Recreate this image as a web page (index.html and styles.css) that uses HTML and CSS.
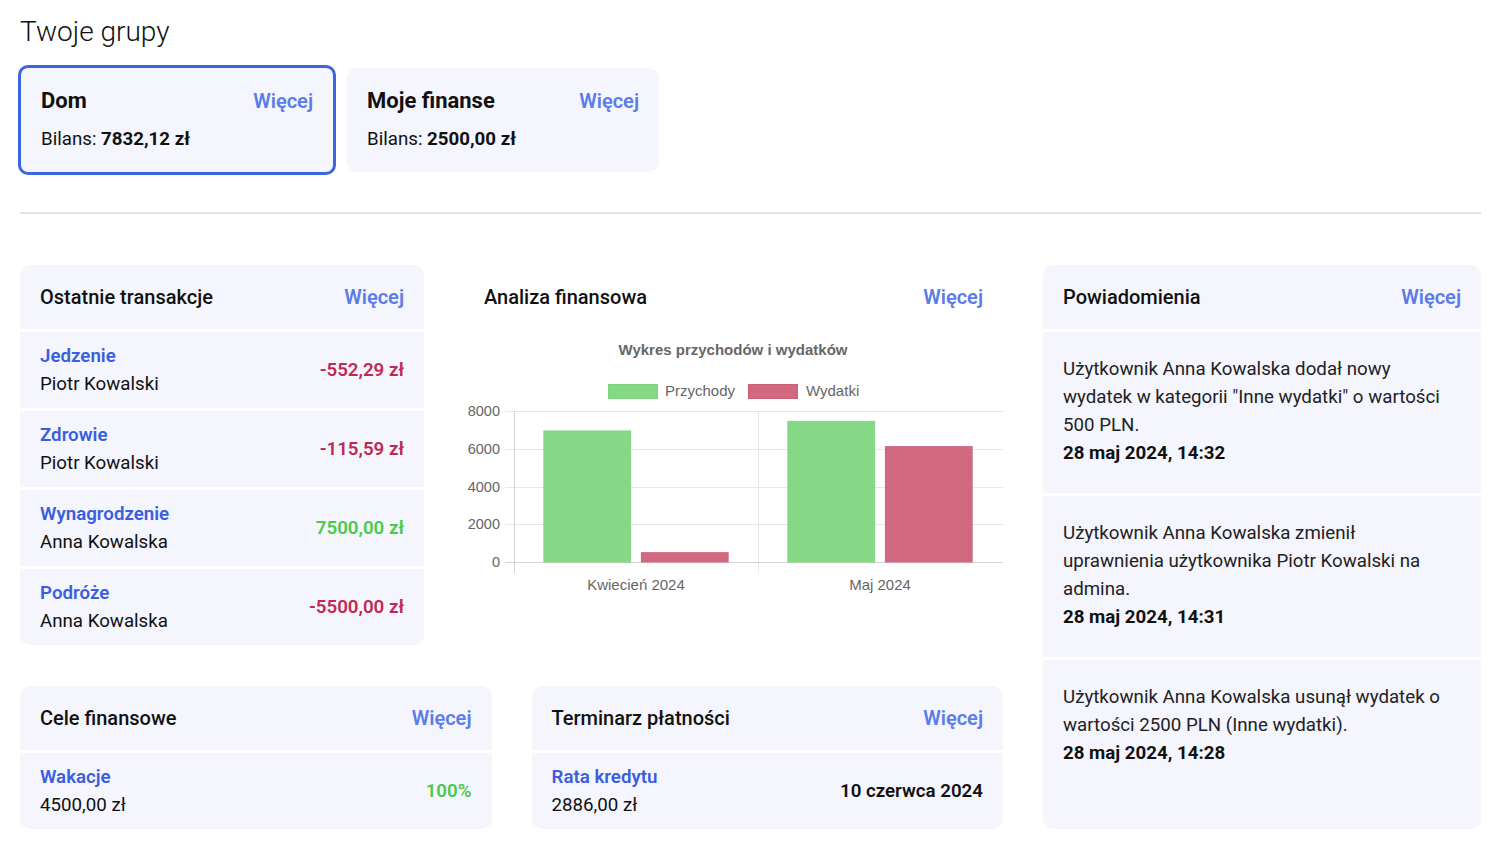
FILE: index.html
```html
<!DOCTYPE html>
<html lang="pl">
<head>
<meta charset="utf-8">
<title>Twoje grupy</title>
<link rel="stylesheet" href="styles.css">
</head>
<body>
<div class="page">
  <h1 class="page-title">Twoje grupy</h1>

  <div class="groups">
    <div class="group-card selected">
      <div class="group-head">
        <span class="group-name">Dom</span>
        <a class="more">Więcej</a>
      </div>
      <div class="group-balance">Bilans: <strong>7832,12 zł</strong></div>
    </div>
    <div class="group-card">
      <div class="group-head">
        <span class="group-name">Moje finanse</span>
        <a class="more">Więcej</a>
      </div>
      <div class="group-balance">Bilans: <strong>2500,00 zł</strong></div>
    </div>
  </div>

  <hr class="divider">

  <div class="dashboard">
    <div class="left-area">
      <div class="top-row">
        <section class="card transactions">
          <div class="card-head">
            <span class="card-title">Ostatnie transakcje</span>
            <a class="more">Więcej</a>
          </div>
          <div class="row">
            <div class="row-main"><a class="row-link">Jedzenie</a><span class="row-sub">Piotr Kowalski</span></div>
            <span class="amount neg">-552,29 zł</span>
          </div>
          <div class="row">
            <div class="row-main"><a class="row-link">Zdrowie</a><span class="row-sub">Piotr Kowalski</span></div>
            <span class="amount neg">-115,59 zł</span>
          </div>
          <div class="row">
            <div class="row-main"><a class="row-link">Wynagrodzenie</a><span class="row-sub">Anna Kowalska</span></div>
            <span class="amount pos">7500,00 zł</span>
          </div>
          <div class="row">
            <div class="row-main"><a class="row-link">Podróże</a><span class="row-sub">Anna Kowalska</span></div>
            <span class="amount neg">-5500,00 zł</span>
          </div>
        </section>

        <section class="analysis">
          <div class="card-head">
            <span class="card-title">Analiza finansowa</span>
            <a class="more">Więcej</a>
          </div>
          <svg class="chart" width="539" height="271" viewBox="0 0 539 271">
            <text class="chart-title" x="269" y="26" text-anchor="middle">Wykres przychodów i wydatków</text>
            <rect x="144.5" y="55.5" width="49" height="14" fill="#86d886" stroke="#7ed37e" stroke-width="1"/>
            <text class="chart-label" x="201" y="67">Przychody</text>
            <rect x="284.5" y="55.5" width="49" height="14" fill="#d06880" stroke="#cc5e78" stroke-width="1"/>
            <text class="chart-label" x="342" y="67">Wydatki</text>

            <g stroke="#e6e6e6" stroke-width="1">
              <line x1="41" y1="82.5" x2="539" y2="82.5"/>
              <line x1="41" y1="120.5" x2="539" y2="120.5"/>
              <line x1="41" y1="158.5" x2="539" y2="158.5"/>
              <line x1="41" y1="195.5" x2="539" y2="195.5"/>
              <line x1="294.5" y1="82" x2="294.5" y2="244"/>
            </g>
            <g stroke="#d4d4d4" stroke-width="1">
              <line x1="41" y1="233.5" x2="539" y2="233.5"/>
              <line x1="50.5" y1="82" x2="50.5" y2="244"/>
            </g>

            <text class="chart-axis" x="36" y="87" text-anchor="end">8000</text>
            <text class="chart-axis" x="36" y="125" text-anchor="end">6000</text>
            <text class="chart-axis" x="36" y="163" text-anchor="end">4000</text>
            <text class="chart-axis" x="36" y="200" text-anchor="end">2000</text>
            <text class="chart-axis" x="36" y="238" text-anchor="end">0</text>

            <rect x="79.3" y="101.4" width="87.8" height="132.1" fill="#86d886"/>
            <rect x="176.9" y="223.1" width="87.8" height="10.4" fill="#d06880"/>
            <rect x="323.3" y="91.9" width="87.8" height="141.6" fill="#86d886"/>
            <rect x="420.9" y="117.1" width="87.8" height="116.4" fill="#d06880"/>

            <text class="chart-label" x="172" y="261" text-anchor="middle">Kwiecień 2024</text>
            <text class="chart-label" x="416" y="261" text-anchor="middle">Maj 2024</text>
          </svg>
        </section>
      </div>

      <div class="bottom-row">
        <section class="card">
          <div class="card-head">
            <span class="card-title">Cele finansowe</span>
            <a class="more">Więcej</a>
          </div>
          <div class="row">
            <div class="row-main"><a class="row-link">Wakacje</a><span class="row-sub">4500,00 zł</span></div>
            <span class="amount pos">100%</span>
          </div>
        </section>
        <section class="card">
          <div class="card-head">
            <span class="card-title">Terminarz płatności</span>
            <a class="more">Więcej</a>
          </div>
          <div class="row">
            <div class="row-main"><a class="row-link">Rata kredytu</a><span class="row-sub">2886,00 zł</span></div>
            <span class="amount date">10 czerwca 2024</span>
          </div>
        </section>
      </div>
    </div>

    <section class="card notifications">
      <div class="card-head">
        <span class="card-title">Powiadomienia</span>
        <a class="more">Więcej</a>
      </div>
      <div class="note">
        <p>Użytkownik Anna Kowalska dodał nowy wydatek w kategorii "Inne wydatki" o wartości 500 PLN.</p>
        <strong>28 maj 2024, 14:32</strong>
      </div>
      <div class="note">
        <p>Użytkownik Anna Kowalska zmienił uprawnienia użytkownika Piotr Kowalski na admina.</p>
        <strong>28 maj 2024, 14:31</strong>
      </div>
      <div class="note last">
        <p>Użytkownik Anna Kowalska usunął wydatek o wartości 2500 PLN (Inne wydatki).</p>
        <strong>28 maj 2024, 14:28</strong>
      </div>
    </section>
  </div>
</div>
</body>
</html>
```

FILE: styles.css
```css
* { box-sizing: border-box; }

html, body {
  margin: 0;
  padding: 0;
  background: #ffffff;
}

body {
  font-family: Roboto, "Noto Sans", "Liberation Sans", sans-serif;
  color: #111111;
  font-size: 18.72px;
}

.page {
  width: 1481px;
  padding-left: 20px;
}

.page-title {
  margin: 15px 0 0 0;
  font-size: 28px;
  font-weight: 300;
  line-height: 33px;
  color: #111111;
}

.groups {
  display: flex;
  align-items: center;
  gap: 11px;
  margin-top: 17px;
  margin-left: -2px;
}

.group-card {
  width: 312px;
  height: 104px;
  padding: 20px;
  background: #f4f5fd;
  border-radius: 10px;
  display: flex;
  flex-direction: column;
  gap: 13px;
}

.group-card.selected {
  width: 318px;
  height: 110px;
  border: 3px solid #3a66e0;
}

.group-head {
  display: flex;
  justify-content: space-between;
  align-items: center;
  line-height: 26px;
}

.group-name {
  font-size: 22px;
  font-weight: 700;
  color: #111;
}

.group-balance {
  line-height: 24px;
}

.group-balance strong {
  font-weight: 700;
}

.more {
  color: #5b7ce9;
  font-weight: 600;
  font-size: 20px;
  cursor: pointer;
}

.divider {
  border: 0;
  height: 2px;
  background: #e2e2e2;
  margin: 37px 0 0 0;
}

.dashboard {
  display: flex;
  gap: 40px;
  margin-top: 51px;
  align-items: stretch;
}

.left-area {
  flex: 1;
  display: flex;
  flex-direction: column;
  gap: 41px;
}

.top-row {
  display: flex;
  gap: 40px;
}

.bottom-row {
  display: grid;
  grid-template-columns: 1fr 1fr;
  gap: 40px;
}

.card {
  display: flex;
  flex-direction: column;
  gap: 3px;
  border-radius: 10px;
  overflow: hidden;
  background: #ffffff;
}

.card > * {
  background: #f4f5fd;
}

.transactions {
  width: 404px;
  flex: none;
}

.card-head {
  display: flex;
  justify-content: space-between;
  align-items: center;
  height: 64px;
  padding: 0 20px;
  line-height: 24px;
}

.card-title {
  font-weight: 500;
  font-size: 20px;
  color: #111;
}

.row {
  display: flex;
  justify-content: space-between;
  align-items: center;
  height: 76px;
  padding: 0 20px;
}

.row-main {
  display: flex;
  flex-direction: column;
  line-height: 28px;
}

.row-link {
  color: #3a5ee0;
  font-weight: 600;
  cursor: pointer;
}

.row-sub {
  color: #111;
}

.amount {
  font-weight: 600;
}

.amount.neg { color: #c02a52; }
.amount.pos { color: #4cc94c; }
.amount.date { color: #111; }

.analysis {
  flex: 1;
  display: flex;
  flex-direction: column;
}

.chart {
  display: block;
  font-family: "Liberation Sans", Arial, sans-serif;
}

.chart-title {
  font-size: 15px;
  font-weight: 700;
  fill: #666666;
}

.chart-label {
  font-size: 15px;
  fill: #666666;
}

.chart-axis {
  font-size: 14.5px;
  fill: #666666;
}

.notifications {
  width: 438px;
  flex: none;
}

.note {
  padding: 23px 33px 26px 20px;
  line-height: 28px;
  color: #222;
}

.note p {
  margin: 0;
}

.note strong {
  display: block;
  font-weight: 700;
  color: #111;
}

.note.last {
  flex: 1;
}
```
